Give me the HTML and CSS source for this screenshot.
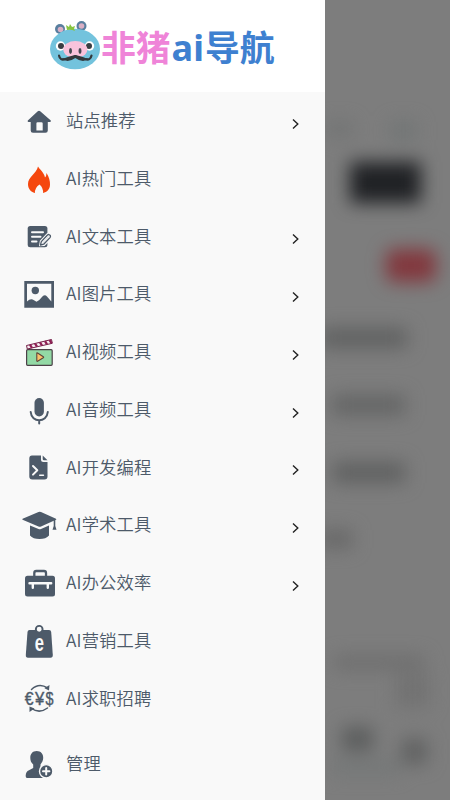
FILE: index.html
```
<!DOCTYPE html>
<html lang="zh-CN">
<head>
<meta charset="utf-8">
<title>非猪ai导航</title>
<link rel="stylesheet" href="styles.css">
</head>
<body>
<div class="screen">
  <aside class="sidebar">
    <header class="brand">
      <svg class="pig" viewBox="0 0 50 50">
        <circle cx="10" cy="8" r="5" fill="#597f9f"/><circle cx="10.5" cy="8.5" r="2.8" fill="#d9afc4"/>
        <circle cx="31.5" cy="5" r="5" fill="#597f9f"/><circle cx="31.5" cy="5" r="2.8" fill="#d9afc4"/>
        <ellipse cx="25" cy="28" rx="25" ry="20.200" fill="#73c3dd"/>
        <path d="M17 9l-1-5 3 2 1-3 2 3 3-1-1 3 1 2q-4-2-8-1z" fill="#87c540"/>
        <circle cx="10.5" cy="25" r="4.700" fill="#fff"/><circle cx="11" cy="25" r="3" fill="#393d42"/>
        <circle cx="39.5" cy="25" r="4.700" fill="#fff"/><circle cx="39" cy="25" r="3" fill="#393d42"/>
        <ellipse cx="25.300" cy="28.500" rx="12" ry="8.500" fill="#f9c3dc"/>
        <path d="M9 34.500Q10 40 15.500 38Q19 36.500 25.300 35.200Q31.500 36.500 35 38Q40.500 40 41.500 34.500" fill="none" stroke="#33383c" stroke-width="2.200" stroke-linecap="round"/>
        <path d="M11 37q6 1 14.300-3q8.300 4 14.300 3q-6 6-14.300 0q-8.300 6-14.300 0z" fill="#33383c"/>
        <ellipse cx="20.500" cy="30" rx="1.500" ry="2.900" fill="#454851"/><ellipse cx="30" cy="30" rx="1.500" ry="2.900" fill="#454851"/>
      </svg>
      <h1 class="brand-name"><span class="brand-pink">非猪</span><span class="brand-ai">ai</span>导航</h1>
    </header>
    <nav class="menu">
      <a class="item"><svg class="icon" viewBox="0 0 36 36"><path fill-rule="evenodd" d="M16.800 8.200Q18 7.200 19.200 8.200L29.800 17.600Q30.300 18.800 29 19H26.800V27.500Q26.800 29.800 24.500 29.800H12Q9.700 29.800 9.700 27.500V19H7.400Q6.200 18.800 6.800 17.600ZM16.500 19.200Q15.400 19.200 15.400 20.400V27.600H21.700V20.400Q21.700 19.200 20.500 19.200Z"/></svg><span class="label">站点推荐</span><svg class="chevron" viewBox="0 0 8 12"><path d="M1 1.500L5.800 6L1 10.500"/></svg></a>
      <a class="item"><svg class="icon" viewBox="0 0 36 36"><path fill="#f5470e" d="M17 5.500C18.500 8.500 23 11 24 16.500Q25.500 15 25.500 12Q29 17.500 29 23.500C29 28.500 26 31 22 32Q22.500 27 18.500 23.500Q13.500 27 14 32C9.500 31 7 27.500 7 23C7 16 15.500 12.500 17 5.500Z"/></svg><span class="label">AI热门工具</span></a>
      <a class="item"><svg class="icon" viewBox="0 0 36 36"><rect x="6.700" y="8" width="19.700" height="21.300" rx="2.500"/><path class="cut" stroke-width="2" d="M11 14.300H22M11 18.800H19.500M11 23.500H15.500"/><path d="M20 26.500L20.500 23.500L26.500 17Q28.500 15.800 29.500 18Q29.800 19 29 19.800L22.800 26.400Z" stroke="#f9f9f9" stroke-width="3.500"/><path class="line" fill="#f9f9f9" stroke-width="1.300" d="M19.500 27L20.300 23.600L26.500 17Q28 15.800 29.300 17.500Q29.800 18.700 29 19.600L22.700 26.200Z"/></svg><span class="label">AI文本工具</span><svg class="chevron" viewBox="0 0 8 12"><path d="M1 1.500L5.800 6L1 10.500"/></svg></a>
      <a class="item"><svg class="icon" viewBox="0 0 36 36"><path fill-rule="evenodd" d="M3.300 5H33V31.700H3.300ZM6 7.700V25.500Q9.500 22 13 24.200L15.500 25.700Q18.500 24.500 20.500 21.500Q23.500 17.500 26 20.500L30.300 25.500V7.700Z"/><circle cx="14.300" cy="14.500" r="3.700"/></svg><span class="label">AI图片工具</span><svg class="chevron" viewBox="0 0 8 12"><path d="M1 1.500L5.800 6L1 10.500"/></svg></a>
      <a class="item"><svg class="icon" viewBox="0 0 36 36"><rect x="5.600" y="15.700" width="25.600" height="15.600" rx="1" fill="#93d9a5" stroke="#4c4148" stroke-width="1.200"/><path d="M5.500 11.500L30.500 5.500L31.300 9.300L6.300 15Z" fill="#f8ecf2" stroke="#732047" stroke-width="1"/><path d="M9 10.700L11 14M14 9.500L16 12.700M19 8.300L21 11.500M24 7.200L26 10.300M28.500 6L30.500 9.200" stroke="#8e1f54" stroke-width="2.300"/><path d="M15.800 19.300Q15.800 18.600 16.600 19L22.300 22.700Q23 23.300 22.300 23.800L16.600 27.300Q15.800 27.600 15.800 26.800Z" fill="#fbc26b" stroke="#60433a" stroke-width="1.100"/></svg><span class="label">AI视频工具</span><svg class="chevron" viewBox="0 0 8 12"><path d="M1 1.500L5.800 6L1 10.500"/></svg></a>
      <a class="item"><svg class="icon" viewBox="0 0 36 36"><rect x="13.500" y="6" width="9.400" height="18.500" rx="4.700"/><path class="line" stroke-width="2" d="M9.700 20C10.500 31 25.800 31 26.800 20M18.200 28.500V31.500"/></svg><span class="label">AI音频工具</span><svg class="chevron" viewBox="0 0 8 12"><path d="M1 1.500L5.800 6L1 10.500"/></svg></a>
      <a class="item"><svg class="icon" viewBox="0 0 36 36"><path d="M11 6.500H20V10.500Q20 13 22.500 13H26.500V27.500Q26.500 30.500 23.500 30.500H11.300Q8.300 30.500 8.300 27.500V9.500Q8.300 6.500 11 6.500ZM21.700 6.500L26.500 11.300H23Q21.700 11.300 21.700 10Z"/><path class="cut" stroke-width="2" d="M12 17L16.300 21.300L12 25.600"/><path class="cut" stroke-width="1.400" d="M18.700 26.200H22.500"/></svg><span class="label">AI开发编程</span><svg class="chevron" viewBox="0 0 8 12"><path d="M1 1.500L5.800 6L1 10.500"/></svg></a>
      <a class="item"><svg class="icon" viewBox="0 0 36 36"><path d="M1.600 11.800L17.500 5Q18.700 4.500 20 5L35 11.800Q35.800 12.300 35 12.800L20 19.600Q18.700 20 17.500 19.600L1.600 12.800Q.9 12.300 1.600 11.800ZM9 18.500L17.500 22Q18.700 22.400 20 22L28 18.500V28.500Q25 32 18.500 32Q12 32 9 28.500Z"/><path d="M32.700 12.500H34.300V19L35.500 22.800H31.500L32.700 19Z"/></svg><span class="label">AI学术工具</span><svg class="chevron" viewBox="0 0 8 12"><path d="M1 1.500L5.800 6L1 10.500"/></svg></a>
      <a class="item"><svg class="icon" viewBox="0 0 36 36"><rect x="4" y="10.800" width="30" height="20.700" rx="2.500"/><path class="line" stroke-width="2.300" d="M13.300 11V8Q13.300 6 15.300 6H23Q25 6 25 8V11"/><path class="cut" stroke-width="2.400" d="M8.500 18.300H30.200M11.800 18.300V22.800M26.800 18.300V22.800"/></svg><span class="label">AI办公效率</span><svg class="chevron" viewBox="0 0 8 12"><path d="M1 1.500L5.800 6L1 10.500"/></svg></a>
      <a class="item"><svg class="icon" viewBox="0 0 36 36"><path d="M8.500 7H28Q30 7 30.200 9L31.800 32Q31.900 34.800 29.500 34.800H7Q4.600 34.800 4.800 32L6.500 9Q6.700 7 8.500 7Z"/><circle cx="18.200" cy="6.300" r="3.400" fill="#f9f9f9" stroke="#4d5a69" stroke-width="1.900"/><text class="bag-letter" transform="translate(18.400 27.800) scale(.72 1)">e</text></svg><span class="label">AI营销工具</span></a>
      <a class="item"><svg class="icon" viewBox="0 0 36 36"><text class="money" transform="translate(8.200 25) scale(.9 1)">€</text><text class="money" transform="translate(18.700 25) scale(.95 1)">¥</text><text class="money" transform="translate(28.500 25) scale(.82 1)">$</text><path class="line" stroke-width="1.500" d="M10.500 9.500Q18 2.500 26.500 8M26.500 28Q18.500 34 10.500 28.500"/><path d="M28.500 5L28 10.500L23.500 8.300ZM8.500 32V26.500L13.500 28.500Z"/></svg><span class="label">AI求职招聘</span></a>
      <a class="item item-admin"><svg class="icon" viewBox="0 0 36 36"><path d="M15.700 5C20 5 22.300 8 22.200 12C22.200 15 20.500 17 19.500 18.500V21.500L24 24V32H6Q4.500 32 4.700 29.500Q4.800 25.500 8 24.300L12.200 22V18.500C10.500 17 9.300 15 9.300 12C9.200 8 11.500 5 15.700 5Z"/><circle cx="25.200" cy="25.300" r="6.700" stroke="#f9f9f9" stroke-width="1.400"/><path class="cut" stroke-width="2" d="M22 25.300H28.400M25.200 22.100V28.500"/></svg><span class="label">管理</span></a>
    </nav>
  </aside>
  <div class="backdrop">
    <div class="blurred">
      <svg viewBox="325 0 125 800">
        <g><rect x="350" y="162" width="71" height="41" fill="#202225"/><rect x="386" y="249" width="50" height="33" rx="8" fill="#82383e"/></g>
        <g fill="#606161"><rect x="320" y="328" width="87" height="20"/><rect x="332" y="395" width="73" height="20" fill="#646565"/><rect x="333" y="462" width="72" height="21"/><rect x="320" y="530" width="32" height="18" fill="#676767"/></g>
        <g><rect x="327" y="122" width="25" height="14" fill="#717373"/><rect x="391" y="122" width="25" height="18" fill="#717575"/><rect x="334" y="656" width="90" height="13" fill="#6d6d6d"/><rect x="396" y="674" width="33" height="33" fill="#727272"/><rect x="342" y="727" width="31" height="24" fill="#5c5e5e"/><rect x="402" y="739" width="25" height="25" fill="#606161"/><rect x="330" y="760" width="70" height="14" fill="#747777"/></g>
      </svg>
    </div>
  </div>
</div>
</body>
</html>
```

FILE: styles.css
```
* { box-sizing: border-box; }
body { margin: 0; font-family: "Noto Sans CJK SC", sans-serif; }
.screen { display: flex; width: 450px; height: 800px; overflow: hidden; }
.sidebar { width: 325px; flex: none; background: #f9f9f9; }
.brand { display: flex; align-items: center; height: 92px; padding: 0 0 0 50px; background: #fff; }
.pig { width: 50px; height: 50px; flex: none; overflow: visible; }
.brand-name { margin: 0 0 1px 1px; font-size: 34.8px; line-height: 50px; font-weight: 700; color: #3e80d0; white-space: nowrap; }
.brand-pink { color: #ef84d8; }
.brand-ai { margin: 0 1px; font-family: "Noto Sans", sans-serif; font-size: 36px; line-height: 1; }
.menu { display: flex; flex-direction: column; }
.item { display: flex; align-items: center; height: 57.75px; padding: 0 25px 0 21px; color: #4d5a69; }
.item-admin { margin-top: 8px; }
.icon { width: 36px; height: 36px; flex: none; fill: #4d5a69; }
.line { fill: none; stroke: #4d5a69; stroke-linecap: round; stroke-linejoin: round; }
.cut { fill: none; stroke: #f9f9f9; stroke-linecap: round; stroke-linejoin: round; }
.label { flex: 1; margin: 0 0 1.400px 9px; font-size: 17.3px; font-weight: 350; line-height: 26px; letter-spacing: .15px; white-space: nowrap; }
.chevron { width: 8px; height: 12px; margin-top: 6px; fill: none; stroke: #222; stroke-width: 1.4; }
.bag-letter { font: 700 23px "Liberation Sans", sans-serif; fill: #f9f9f9; text-anchor: middle; }
.money { font: 400 17.5px "Liberation Sans", sans-serif; text-anchor: middle; stroke: #4d5a69; stroke-width: .4; }
.backdrop { flex: 1; background: #7d7d7d; overflow: hidden; }
.blurred { width: 125px; height: 800px; filter: blur(9px); }
.blurred svg { display: block; width: 125px; height: 800px; overflow: visible; }
```
